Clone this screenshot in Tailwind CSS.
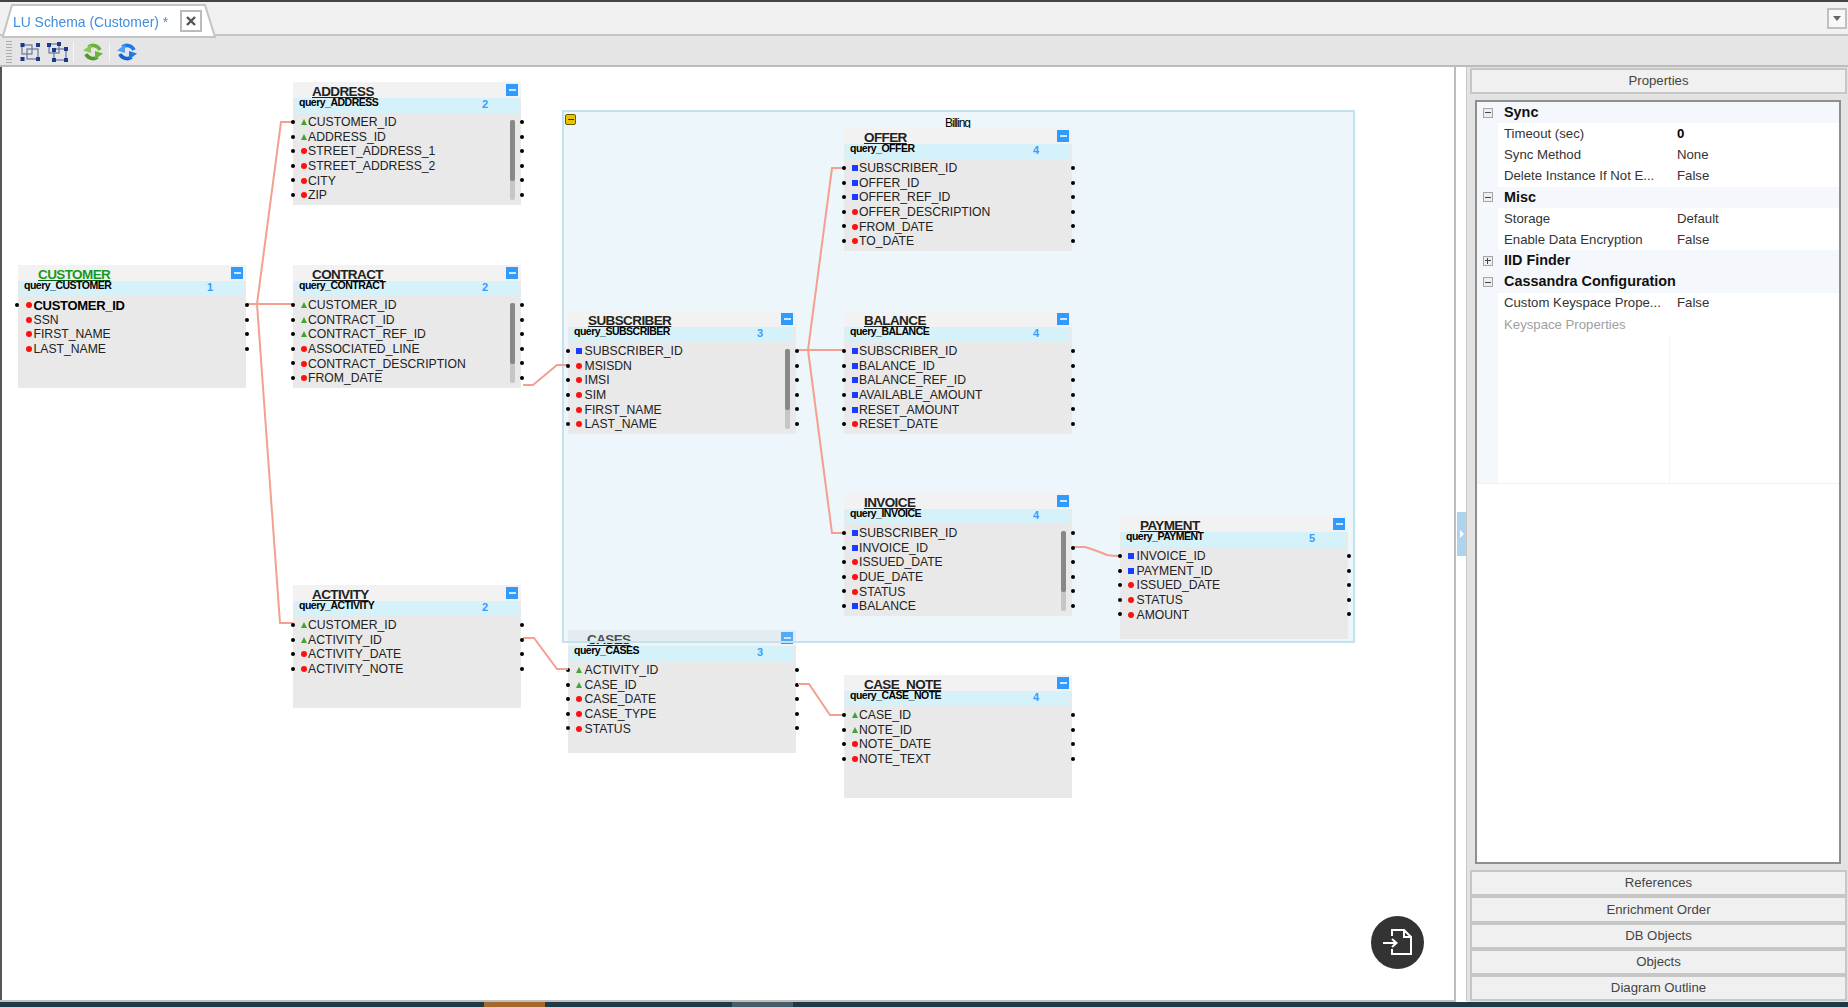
<!doctype html>
<html><head><meta charset="utf-8"><script src="https://cdn.jsdelivr.net/npm/@tailwindcss/browser@4"></script><title>LU Schema</title></head>
<body class="overflow-hidden bg-white">
<div class="relative flex flex-col w-[1848px] h-[1007px] overflow-hidden font-['Liberation_Sans',Arial,sans-serif] text-[#222] blur-[0.5px]">

<!-- tab strip -->
<div class="relative h-[36px] shrink-0 bg-[#f1f1f1] border-t-2 border-t-[#444] border-b-2 border-b-[#c4c4c4]">
  <svg class="absolute left-0 top-[-2px]" width="230" height="38"><polygon points="3,36 12,5 205,5 215,37 3,37" fill="#fff" stroke="#c4c4c4" stroke-width="2"/></svg>
  <span class="absolute left-[13px] top-[11px] text-[13.9px] leading-[18px] text-[#3f8fdd]">LU Schema (Customer) *</span>
  <div class="absolute left-[180px] top-[8px] size-[22px] bg-white border-2 border-[#bbb] flex items-center justify-center">
    <svg width="12" height="12"><path d="M2 2L10 10M10 2L2 10" stroke="#555" stroke-width="2.4"/></svg>
  </div>
  <div class="absolute left-[1827px] top-[6px] w-[20px] h-[21px] bg-[#f8f8f8] border-2 border-[#c0c0c0] flex items-center justify-center">
    <svg width="10" height="7"><polygon points="1,1 9,1 5,6" fill="#666"/></svg>
  </div>
</div>

<!-- toolbar -->
<div class="h-[31px] shrink-0 bg-[#e5e5e5] border-b-2 border-b-[#bcbcbc] flex items-center pl-[6px] pt-[2px]">
  <div class="w-[6px] h-[24px] bg-[radial-gradient(#a8a8a8_35%,transparent_40%)] bg-[length:2px_3px] mr-[8px]"></div>
  <svg width="22" height="22" class="mr-[4px]"><rect x="2" y="4" width="10" height="9" fill="none" stroke="#66789c" stroke-width="1.2"/><rect x="7" y="8" width="11" height="10" fill="none" stroke="#66789c" stroke-width="1.2"/><g fill="#1c3a8c"><rect x="0.5" y="2" width="4" height="4"/><rect x="16" y="2" width="4" height="4"/><rect x="0.5" y="16" width="4" height="4"/><rect x="16" y="16" width="4" height="4"/></g></svg>
  <svg width="22" height="22" class="mr-[5px]"><rect x="3" y="3" width="10" height="9" fill="none" stroke="#66789c" stroke-width="1.2"/><rect x="8" y="8" width="12" height="11" fill="none" stroke="#66789c" stroke-width="1.2"/><g fill="#1c3a8c"><rect x="1" y="2" width="4" height="4"/><rect x="11" y="1" width="4" height="4"/><rect x="6" y="7" width="4" height="4"/><rect x="18" y="6" width="4" height="4"/><rect x="6" y="17" width="4" height="4"/><rect x="18" y="17" width="4" height="4"/></g></svg>
  <div class="w-[1px] h-[20px] bg-[#f6f6f6] mr-[8px]"></div>
  <svg width="22" height="22" viewBox="0 0 22 22" class="mr-[5px]"><g><path d="M18 9A7.5 7.5 0 0 0 6.5 6" fill="none" stroke="#6cb33a" stroke-width="3.6"/><polygon points="1,9.5 9,3.5 9,12" fill="#8ac85a"/></g><g transform="rotate(180 11 11)"><path d="M18 9A7.5 7.5 0 0 0 6.5 6" fill="none" stroke="#4c9a2a" stroke-width="3.6"/><polygon points="1,9.5 9,3.5 9,12" fill="#6cb33a"/></g></svg>
  <div class="w-[1px] h-[20px] bg-[#f6f6f6] mr-[6px]"></div>
  <svg width="22" height="22" viewBox="0 0 22 22"><g><path d="M18 9A7.5 7.5 0 0 0 6.5 6" fill="none" stroke="#1e7be6" stroke-width="3.6"/><polygon points="1,9.5 9,3.5 9,12" fill="#4fa0f0"/></g><g transform="rotate(180 11 11)"><path d="M18 9A7.5 7.5 0 0 0 6.5 6" fill="none" stroke="#0f62d8" stroke-width="3.6"/><polygon points="1,9.5 9,3.5 9,12" fill="#1e7be6"/></g></svg>
</div>

<!-- main -->
<div class="flex-1 flex min-h-0">
  <!-- canvas -->
  <div class="relative w-[1456px] bg-white border-r-2 border-r-[#bdbdbd] border-b-2 border-b-[#c0c0c0] text-[12.2px]">
    <div class="absolute left-0 top-0 bottom-0 w-[2px] bg-[#555]"></div>

    <!-- CASES sits under the group -->
    <div class="absolute left-[568px] top-[563px] w-[228px] h-[123px] bg-[#e9e9e9]">
      <div class="relative h-[16px] bg-[#f2f2f2]"><span class="absolute left-[19px] top-[1px] text-[13.5px] leading-[18px] font-bold tracking-[-0.6px] underline underline-offset-[1px]">CASES</span><div class="absolute left-[213px] top-[2px] size-[12px] bg-[#2f9bff] flex items-center justify-center"><div class="w-[7px] h-[2px] bg-[#cfe8ff]"></div></div></div>
      <div class="relative h-[15px] mx-[2px] bg-[#d5f1f9]"><span class="absolute left-[4px] top-[-2px] text-[10.5px] leading-[12px] font-bold tracking-[-0.5px] text-black">query_CASES</span><span class="absolute left-[187px] top-[0px] text-[11px] leading-[13px] font-bold text-[#3a9bff]">3</span></div>
      <div class="pt-[2px]">
        <div class="relative flex items-center gap-[2.5px] h-[14.6px] pl-[8px]"><i class="absolute left-[-2px] top-[5px] size-[4px] rounded-full bg-black"></i><i class="w-0 h-0 border-x-[3px] border-x-transparent border-b-[6px] border-b-[#3fa535]"></i>ACTIVITY_ID<i class="absolute right-[-3px] top-[5px] size-[4px] rounded-full bg-black"></i></div>
        <div class="relative flex items-center gap-[2.5px] h-[14.6px] pl-[8px]"><i class="absolute left-[-2px] top-[5px] size-[4px] rounded-full bg-black"></i><i class="w-0 h-0 border-x-[3px] border-x-transparent border-b-[6px] border-b-[#3fa535]"></i>CASE_ID<i class="absolute right-[-3px] top-[5px] size-[4px] rounded-full bg-black"></i></div>
        <div class="relative flex items-center gap-[2.5px] h-[14.6px] pl-[8px]"><i class="absolute left-[-2px] top-[5px] size-[4px] rounded-full bg-black"></i><i class="size-[6px] rounded-full bg-[#ff1010]"></i>CASE_DATE<i class="absolute right-[-3px] top-[5px] size-[4px] rounded-full bg-black"></i></div>
        <div class="relative flex items-center gap-[2.5px] h-[14.6px] pl-[8px]"><i class="absolute left-[-2px] top-[5px] size-[4px] rounded-full bg-black"></i><i class="size-[6px] rounded-full bg-[#ff1010]"></i>CASE_TYPE<i class="absolute right-[-3px] top-[5px] size-[4px] rounded-full bg-black"></i></div>
        <div class="relative flex items-center gap-[2.5px] h-[14.6px] pl-[8px]"><i class="absolute left-[-2px] top-[5px] size-[4px] rounded-full bg-black"></i><i class="size-[6px] rounded-full bg-[#ff1010]"></i>STATUS<i class="absolute right-[-3px] top-[5px] size-[4px] rounded-full bg-black"></i></div>
      </div>
    </div>

    <!-- Billing group -->
    <div class="absolute left-[562px] top-[43px] w-[793px] h-[533px] bg-[#b8dcec]/25 border-2 border-[#c4e2ee]">
      <div class="absolute left-[1px] top-[2px] size-[11px] rounded-[2px] bg-[#e8c400] border border-[#6b5a00] flex items-center justify-center"><div class="w-[6px] h-[1.5px] bg-[#333]"></div></div>
      <span class="absolute left-[381px] top-[4px] text-[12px] leading-[14px] text-black tracking-[-1px]">Billing</span>
    </div>

    <!-- links -->
    <svg class="absolute left-0 top-0" width="1456" height="934" viewBox="0 67 1456 934" fill="none" stroke="#f4a090" stroke-width="2">
      <path d="M247 304H257L281 122H293M257 304H293M257 304L280 623H293"/>
      <path d="M523 385H533L557 365H568"/>
      <path d="M798 350H808L832 168H844M798 350H844M808 350L832 533H844"/>
      <path d="M523 638H534L557 669H568"/>
      <path d="M798 684H809L830 715H844"/>
      <path d="M1074 547H1085Q1098 551 1107 555Q1112 556 1120 556"/>
    </svg>

    <!-- CUSTOMER -->
    <div class="absolute left-[18px] top-[198px] w-[228px] h-[123px] bg-[#e9e9e9]">
      <div class="relative h-[16px] bg-[#f2f2f2]"><span class="absolute left-[20px] top-[1px] text-[13.5px] leading-[18px] font-bold tracking-[-0.6px] text-[#17991f] underline decoration-[#0b5a10] underline-offset-[1px]">CUSTOMER</span><div class="absolute left-[213px] top-[2px] size-[12px] bg-[#2f9bff] flex items-center justify-center"><div class="w-[7px] h-[2px] bg-[#cfe8ff]"></div></div></div>
      <div class="relative h-[15px] mx-[2px] bg-[#d5f1f9]"><span class="absolute left-[4px] top-[-2px] text-[10.5px] leading-[12px] font-bold tracking-[-0.5px] text-black">query_CUSTOMER</span><span class="absolute left-[187px] top-[0px] text-[11px] leading-[13px] font-bold text-[#3a9bff]">1</span></div>
      <div class="pt-[2px]">
        <div class="relative flex items-center gap-[1.5px] h-[14.6px] pl-[8px] font-bold text-[13px] tracking-[-0.3px] text-black"><i class="absolute left-[-3px] top-[5px] size-[4px] rounded-full bg-black"></i><i class="size-[6px] rounded-full bg-[#ff1010]"></i>CUSTOMER_ID<i class="absolute right-[-3px] top-[5px] size-[4px] rounded-full bg-black"></i></div>
        <div class="relative flex items-center gap-[1.5px] h-[14.6px] pl-[8px]"><i class="size-[6px] rounded-full bg-[#ff1010]"></i>SSN<i class="absolute right-[-3px] top-[5px] size-[4px] rounded-full bg-black"></i></div>
        <div class="relative flex items-center gap-[1.5px] h-[14.6px] pl-[8px]"><i class="size-[6px] rounded-full bg-[#ff1010]"></i>FIRST_NAME<i class="absolute right-[-3px] top-[5px] size-[4px] rounded-full bg-black"></i></div>
        <div class="relative flex items-center gap-[1.5px] h-[14.6px] pl-[8px]"><i class="size-[6px] rounded-full bg-[#ff1010]"></i>LAST_NAME<i class="absolute right-[-3px] top-[5px] size-[4px] rounded-full bg-black"></i></div>
      </div>
    </div>

    <!-- ADDRESS -->
    <div class="absolute left-[293px] top-[15px] w-[228px] h-[123px] bg-[#e9e9e9]">
      <div class="relative h-[16px] bg-[#f2f2f2]"><span class="absolute left-[19px] top-[1px] text-[13.5px] leading-[18px] font-bold tracking-[-0.6px] underline underline-offset-[1px]">ADDRESS</span><div class="absolute left-[213px] top-[2px] size-[12px] bg-[#2f9bff] flex items-center justify-center"><div class="w-[7px] h-[2px] bg-[#cfe8ff]"></div></div></div>
      <div class="relative h-[15px] mx-[2px] bg-[#d5f1f9]"><span class="absolute left-[4px] top-[-2px] text-[10.5px] leading-[12px] font-bold tracking-[-0.5px] text-black">query_ADDRESS</span><span class="absolute left-[187px] top-[0px] text-[11px] leading-[13px] font-bold text-[#3a9bff]">2</span></div>
      <div class="absolute left-[217px] top-[38px] w-[5px] h-[80px] rounded-[2px] bg-[#c6c6c6]"><div class="h-[61px] rounded-[2px] bg-[#888]"></div></div>
      <div class="pt-[2px]">
        <div class="relative flex items-center gap-[1px] h-[14.6px] pl-[8px]"><i class="absolute left-[-2px] top-[5px] size-[4px] rounded-full bg-black"></i><i class="w-0 h-0 border-x-[3px] border-x-transparent border-b-[6px] border-b-[#3fa535]"></i>CUSTOMER_ID<i class="absolute right-[-3px] top-[5px] size-[4px] rounded-full bg-black"></i></div>
        <div class="relative flex items-center gap-[1px] h-[14.6px] pl-[8px]"><i class="absolute left-[-2px] top-[5px] size-[4px] rounded-full bg-black"></i><i class="w-0 h-0 border-x-[3px] border-x-transparent border-b-[6px] border-b-[#3fa535]"></i>ADDRESS_ID<i class="absolute right-[-3px] top-[5px] size-[4px] rounded-full bg-black"></i></div>
        <div class="relative flex items-center gap-[1px] h-[14.6px] pl-[8px]"><i class="absolute left-[-2px] top-[5px] size-[4px] rounded-full bg-black"></i><i class="size-[6px] rounded-full bg-[#ff1010]"></i>STREET_ADDRESS_1<i class="absolute right-[-3px] top-[5px] size-[4px] rounded-full bg-black"></i></div>
        <div class="relative flex items-center gap-[1px] h-[14.6px] pl-[8px]"><i class="absolute left-[-2px] top-[5px] size-[4px] rounded-full bg-black"></i><i class="size-[6px] rounded-full bg-[#ff1010]"></i>STREET_ADDRESS_2<i class="absolute right-[-3px] top-[5px] size-[4px] rounded-full bg-black"></i></div>
        <div class="relative flex items-center gap-[1px] h-[14.6px] pl-[8px]"><i class="absolute left-[-2px] top-[5px] size-[4px] rounded-full bg-black"></i><i class="size-[6px] rounded-full bg-[#ff1010]"></i>CITY<i class="absolute right-[-3px] top-[5px] size-[4px] rounded-full bg-black"></i></div>
        <div class="relative flex items-center gap-[1px] h-[14.6px] pl-[8px]"><i class="absolute left-[-2px] top-[5px] size-[4px] rounded-full bg-black"></i><i class="size-[6px] rounded-full bg-[#ff1010]"></i>ZIP<i class="absolute right-[-3px] top-[5px] size-[4px] rounded-full bg-black"></i></div>
      </div>
    </div>

    <!-- CONTRACT -->
    <div class="absolute left-[293px] top-[198px] w-[228px] h-[123px] bg-[#e9e9e9]">
      <div class="relative h-[16px] bg-[#f2f2f2]"><span class="absolute left-[19px] top-[1px] text-[13.5px] leading-[18px] font-bold tracking-[-0.6px] underline underline-offset-[1px]">CONTRACT</span><div class="absolute left-[213px] top-[2px] size-[12px] bg-[#2f9bff] flex items-center justify-center"><div class="w-[7px] h-[2px] bg-[#cfe8ff]"></div></div></div>
      <div class="relative h-[15px] mx-[2px] bg-[#d5f1f9]"><span class="absolute left-[4px] top-[-2px] text-[10.5px] leading-[12px] font-bold tracking-[-0.5px] text-black">query_CONTRACT</span><span class="absolute left-[187px] top-[0px] text-[11px] leading-[13px] font-bold text-[#3a9bff]">2</span></div>
      <div class="absolute left-[217px] top-[38px] w-[5px] h-[80px] rounded-[2px] bg-[#c6c6c6]"><div class="h-[61px] rounded-[2px] bg-[#888]"></div></div>
      <div class="pt-[2px]">
        <div class="relative flex items-center gap-[1px] h-[14.6px] pl-[8px]"><i class="absolute left-[-2px] top-[5px] size-[4px] rounded-full bg-black"></i><i class="w-0 h-0 border-x-[3px] border-x-transparent border-b-[6px] border-b-[#3fa535]"></i>CUSTOMER_ID<i class="absolute right-[-3px] top-[5px] size-[4px] rounded-full bg-black"></i></div>
        <div class="relative flex items-center gap-[1px] h-[14.6px] pl-[8px]"><i class="absolute left-[-2px] top-[5px] size-[4px] rounded-full bg-black"></i><i class="w-0 h-0 border-x-[3px] border-x-transparent border-b-[6px] border-b-[#3fa535]"></i>CONTRACT_ID<i class="absolute right-[-3px] top-[5px] size-[4px] rounded-full bg-black"></i></div>
        <div class="relative flex items-center gap-[1px] h-[14.6px] pl-[8px]"><i class="absolute left-[-2px] top-[5px] size-[4px] rounded-full bg-black"></i><i class="w-0 h-0 border-x-[3px] border-x-transparent border-b-[6px] border-b-[#3fa535]"></i>CONTRACT_REF_ID<i class="absolute right-[-3px] top-[5px] size-[4px] rounded-full bg-black"></i></div>
        <div class="relative flex items-center gap-[1px] h-[14.6px] pl-[8px]"><i class="absolute left-[-2px] top-[5px] size-[4px] rounded-full bg-black"></i><i class="size-[6px] rounded-full bg-[#ff1010]"></i>ASSOCIATED_LINE<i class="absolute right-[-3px] top-[5px] size-[4px] rounded-full bg-black"></i></div>
        <div class="relative flex items-center gap-[1px] h-[14.6px] pl-[8px]"><i class="absolute left-[-2px] top-[5px] size-[4px] rounded-full bg-black"></i><i class="size-[6px] rounded-full bg-[#ff1010]"></i>CONTRACT_DESCRIPTION<i class="absolute right-[-3px] top-[5px] size-[4px] rounded-full bg-black"></i></div>
        <div class="relative flex items-center gap-[1px] h-[14.6px] pl-[8px]"><i class="absolute left-[-2px] top-[5px] size-[4px] rounded-full bg-black"></i><i class="size-[6px] rounded-full bg-[#ff1010]"></i>FROM_DATE<i class="absolute right-[-3px] top-[5px] size-[4px] rounded-full bg-black"></i></div>
      </div>
    </div>

    <!-- ACTIVITY -->
    <div class="absolute left-[293px] top-[518px] w-[228px] h-[123px] bg-[#e9e9e9]">
      <div class="relative h-[16px] bg-[#f2f2f2]"><span class="absolute left-[19px] top-[1px] text-[13.5px] leading-[18px] font-bold tracking-[-0.6px] underline underline-offset-[1px]">ACTIVITY</span><div class="absolute left-[213px] top-[2px] size-[12px] bg-[#2f9bff] flex items-center justify-center"><div class="w-[7px] h-[2px] bg-[#cfe8ff]"></div></div></div>
      <div class="relative h-[15px] mx-[2px] bg-[#d5f1f9]"><span class="absolute left-[4px] top-[-2px] text-[10.5px] leading-[12px] font-bold tracking-[-0.5px] text-black">query_ACTIVITY</span><span class="absolute left-[187px] top-[0px] text-[11px] leading-[13px] font-bold text-[#3a9bff]">2</span></div>
      <div class="pt-[2px]">
        <div class="relative flex items-center gap-[1px] h-[14.6px] pl-[8px]"><i class="absolute left-[-2px] top-[5px] size-[4px] rounded-full bg-black"></i><i class="w-0 h-0 border-x-[3px] border-x-transparent border-b-[6px] border-b-[#3fa535]"></i>CUSTOMER_ID<i class="absolute right-[-3px] top-[5px] size-[4px] rounded-full bg-black"></i></div>
        <div class="relative flex items-center gap-[1px] h-[14.6px] pl-[8px]"><i class="absolute left-[-2px] top-[5px] size-[4px] rounded-full bg-black"></i><i class="w-0 h-0 border-x-[3px] border-x-transparent border-b-[6px] border-b-[#3fa535]"></i>ACTIVITY_ID<i class="absolute right-[-3px] top-[5px] size-[4px] rounded-full bg-black"></i></div>
        <div class="relative flex items-center gap-[1px] h-[14.6px] pl-[8px]"><i class="absolute left-[-2px] top-[5px] size-[4px] rounded-full bg-black"></i><i class="size-[6px] rounded-full bg-[#ff1010]"></i>ACTIVITY_DATE<i class="absolute right-[-3px] top-[5px] size-[4px] rounded-full bg-black"></i></div>
        <div class="relative flex items-center gap-[1px] h-[14.6px] pl-[8px]"><i class="absolute left-[-2px] top-[5px] size-[4px] rounded-full bg-black"></i><i class="size-[6px] rounded-full bg-[#ff1010]"></i>ACTIVITY_NOTE<i class="absolute right-[-3px] top-[5px] size-[4px] rounded-full bg-black"></i></div>
      </div>
    </div>

    <!-- SUBSCRIBER -->
    <div class="absolute left-[568px] top-[244px] w-[228px] h-[123px] bg-[#e9e9e9]">
      <div class="relative h-[16px] bg-[#f2f2f2]"><span class="absolute left-[20px] top-[1px] text-[13.5px] leading-[18px] font-bold tracking-[-0.6px] underline underline-offset-[1px]">SUBSCRIBER</span><div class="absolute left-[213px] top-[2px] size-[12px] bg-[#2f9bff] flex items-center justify-center"><div class="w-[7px] h-[2px] bg-[#cfe8ff]"></div></div></div>
      <div class="relative h-[15px] mx-[2px] bg-[#d5f1f9]"><span class="absolute left-[4px] top-[-2px] text-[10.5px] leading-[12px] font-bold tracking-[-0.5px] text-black">query_SUBSCRIBER</span><span class="absolute left-[187px] top-[0px] text-[11px] leading-[13px] font-bold text-[#3a9bff]">3</span></div>
      <div class="absolute left-[217px] top-[38px] w-[5px] h-[80px] rounded-[2px] bg-[#c6c6c6]"><div class="h-[61px] rounded-[2px] bg-[#888]"></div></div>
      <div class="pt-[2px]">
        <div class="relative flex items-center gap-[2.5px] h-[14.6px] pl-[8px]"><i class="absolute left-[-2px] top-[5px] size-[4px] rounded-full bg-black"></i><i class="size-[6px] bg-[#1a3cff]"></i>SUBSCRIBER_ID<i class="absolute right-[-3px] top-[5px] size-[4px] rounded-full bg-black"></i></div>
        <div class="relative flex items-center gap-[2.5px] h-[14.6px] pl-[8px]"><i class="absolute left-[-2px] top-[5px] size-[4px] rounded-full bg-black"></i><i class="size-[6px] rounded-full bg-[#ff1010]"></i>MSISDN<i class="absolute right-[-3px] top-[5px] size-[4px] rounded-full bg-black"></i></div>
        <div class="relative flex items-center gap-[2.5px] h-[14.6px] pl-[8px]"><i class="absolute left-[-2px] top-[5px] size-[4px] rounded-full bg-black"></i><i class="size-[6px] rounded-full bg-[#ff1010]"></i>IMSI<i class="absolute right-[-3px] top-[5px] size-[4px] rounded-full bg-black"></i></div>
        <div class="relative flex items-center gap-[2.5px] h-[14.6px] pl-[8px]"><i class="absolute left-[-2px] top-[5px] size-[4px] rounded-full bg-black"></i><i class="size-[6px] rounded-full bg-[#ff1010]"></i>SIM<i class="absolute right-[-3px] top-[5px] size-[4px] rounded-full bg-black"></i></div>
        <div class="relative flex items-center gap-[2.5px] h-[14.6px] pl-[8px]"><i class="absolute left-[-2px] top-[5px] size-[4px] rounded-full bg-black"></i><i class="size-[6px] rounded-full bg-[#ff1010]"></i>FIRST_NAME<i class="absolute right-[-3px] top-[5px] size-[4px] rounded-full bg-black"></i></div>
        <div class="relative flex items-center gap-[2.5px] h-[14.6px] pl-[8px]"><i class="absolute left-[-2px] top-[5px] size-[4px] rounded-full bg-black"></i><i class="size-[6px] rounded-full bg-[#ff1010]"></i>LAST_NAME<i class="absolute right-[-3px] top-[5px] size-[4px] rounded-full bg-black"></i></div>
      </div>
    </div>

    <!-- OFFER -->
    <div class="absolute left-[844px] top-[61px] w-[228px] h-[123px] bg-[#e9e9e9]">
      <div class="relative h-[16px] bg-[#f2f2f2]"><span class="absolute left-[20px] top-[1px] text-[13.5px] leading-[18px] font-bold tracking-[-0.6px] underline underline-offset-[1px]">OFFER</span><div class="absolute left-[213px] top-[2px] size-[12px] bg-[#2f9bff] flex items-center justify-center"><div class="w-[7px] h-[2px] bg-[#cfe8ff]"></div></div></div>
      <div class="relative h-[15px] mx-[2px] bg-[#d5f1f9]"><span class="absolute left-[4px] top-[-2px] text-[10.5px] leading-[12px] font-bold tracking-[-0.5px] text-black">query_OFFER</span><span class="absolute left-[187px] top-[0px] text-[11px] leading-[13px] font-bold text-[#3a9bff]">4</span></div>
      <div class="pt-[2px]">
        <div class="relative flex items-center gap-[1px] h-[14.6px] pl-[8px]"><i class="absolute left-[-2px] top-[5px] size-[4px] rounded-full bg-black"></i><i class="size-[6px] bg-[#1a3cff]"></i>SUBSCRIBER_ID<i class="absolute right-[-3px] top-[5px] size-[4px] rounded-full bg-black"></i></div>
        <div class="relative flex items-center gap-[1px] h-[14.6px] pl-[8px]"><i class="absolute left-[-2px] top-[5px] size-[4px] rounded-full bg-black"></i><i class="size-[6px] bg-[#1a3cff]"></i>OFFER_ID<i class="absolute right-[-3px] top-[5px] size-[4px] rounded-full bg-black"></i></div>
        <div class="relative flex items-center gap-[1px] h-[14.6px] pl-[8px]"><i class="absolute left-[-2px] top-[5px] size-[4px] rounded-full bg-black"></i><i class="size-[6px] bg-[#1a3cff]"></i>OFFER_REF_ID<i class="absolute right-[-3px] top-[5px] size-[4px] rounded-full bg-black"></i></div>
        <div class="relative flex items-center gap-[1px] h-[14.6px] pl-[8px]"><i class="absolute left-[-2px] top-[5px] size-[4px] rounded-full bg-black"></i><i class="size-[6px] rounded-full bg-[#ff1010]"></i>OFFER_DESCRIPTION<i class="absolute right-[-3px] top-[5px] size-[4px] rounded-full bg-black"></i></div>
        <div class="relative flex items-center gap-[1px] h-[14.6px] pl-[8px]"><i class="absolute left-[-2px] top-[5px] size-[4px] rounded-full bg-black"></i><i class="size-[6px] rounded-full bg-[#ff1010]"></i>FROM_DATE<i class="absolute right-[-3px] top-[5px] size-[4px] rounded-full bg-black"></i></div>
        <div class="relative flex items-center gap-[1px] h-[14.6px] pl-[8px]"><i class="absolute left-[-2px] top-[5px] size-[4px] rounded-full bg-black"></i><i class="size-[6px] rounded-full bg-[#ff1010]"></i>TO_DATE<i class="absolute right-[-3px] top-[5px] size-[4px] rounded-full bg-black"></i></div>
      </div>
    </div>

    <!-- BALANCE -->
    <div class="absolute left-[844px] top-[244px] w-[228px] h-[123px] bg-[#e9e9e9]">
      <div class="relative h-[16px] bg-[#f2f2f2]"><span class="absolute left-[20px] top-[1px] text-[13.5px] leading-[18px] font-bold tracking-[-0.6px] underline underline-offset-[1px]">BALANCE</span><div class="absolute left-[213px] top-[2px] size-[12px] bg-[#2f9bff] flex items-center justify-center"><div class="w-[7px] h-[2px] bg-[#cfe8ff]"></div></div></div>
      <div class="relative h-[15px] mx-[2px] bg-[#d5f1f9]"><span class="absolute left-[4px] top-[-2px] text-[10.5px] leading-[12px] font-bold tracking-[-0.5px] text-black">query_BALANCE</span><span class="absolute left-[187px] top-[0px] text-[11px] leading-[13px] font-bold text-[#3a9bff]">4</span></div>
      <div class="pt-[2px]">
        <div class="relative flex items-center gap-[1px] h-[14.6px] pl-[8px]"><i class="absolute left-[-2px] top-[5px] size-[4px] rounded-full bg-black"></i><i class="size-[6px] bg-[#1a3cff]"></i>SUBSCRIBER_ID<i class="absolute right-[-3px] top-[5px] size-[4px] rounded-full bg-black"></i></div>
        <div class="relative flex items-center gap-[1px] h-[14.6px] pl-[8px]"><i class="absolute left-[-2px] top-[5px] size-[4px] rounded-full bg-black"></i><i class="size-[6px] bg-[#1a3cff]"></i>BALANCE_ID<i class="absolute right-[-3px] top-[5px] size-[4px] rounded-full bg-black"></i></div>
        <div class="relative flex items-center gap-[1px] h-[14.6px] pl-[8px]"><i class="absolute left-[-2px] top-[5px] size-[4px] rounded-full bg-black"></i><i class="size-[6px] bg-[#1a3cff]"></i>BALANCE_REF_ID<i class="absolute right-[-3px] top-[5px] size-[4px] rounded-full bg-black"></i></div>
        <div class="relative flex items-center gap-[1px] h-[14.6px] pl-[8px]"><i class="absolute left-[-2px] top-[5px] size-[4px] rounded-full bg-black"></i><i class="size-[6px] bg-[#1a3cff]"></i>AVAILABLE_AMOUNT<i class="absolute right-[-3px] top-[5px] size-[4px] rounded-full bg-black"></i></div>
        <div class="relative flex items-center gap-[1px] h-[14.6px] pl-[8px]"><i class="absolute left-[-2px] top-[5px] size-[4px] rounded-full bg-black"></i><i class="size-[6px] bg-[#1a3cff]"></i>RESET_AMOUNT<i class="absolute right-[-3px] top-[5px] size-[4px] rounded-full bg-black"></i></div>
        <div class="relative flex items-center gap-[1px] h-[14.6px] pl-[8px]"><i class="absolute left-[-2px] top-[5px] size-[4px] rounded-full bg-black"></i><i class="size-[6px] rounded-full bg-[#ff1010]"></i>RESET_DATE<i class="absolute right-[-3px] top-[5px] size-[4px] rounded-full bg-black"></i></div>
      </div>
    </div>

    <!-- INVOICE -->
    <div class="absolute left-[844px] top-[426px] w-[228px] h-[123px] bg-[#e9e9e9]">
      <div class="relative h-[16px] bg-[#f2f2f2]"><span class="absolute left-[20px] top-[1px] text-[13.5px] leading-[18px] font-bold tracking-[-0.6px] underline underline-offset-[1px]">INVOICE</span><div class="absolute left-[213px] top-[2px] size-[12px] bg-[#2f9bff] flex items-center justify-center"><div class="w-[7px] h-[2px] bg-[#cfe8ff]"></div></div></div>
      <div class="relative h-[15px] mx-[2px] bg-[#d5f1f9]"><span class="absolute left-[4px] top-[-2px] text-[10.5px] leading-[12px] font-bold tracking-[-0.5px] text-black">query_INVOICE</span><span class="absolute left-[187px] top-[0px] text-[11px] leading-[13px] font-bold text-[#3a9bff]">4</span></div>
      <div class="absolute left-[217px] top-[38px] w-[5px] h-[80px] rounded-[2px] bg-[#c6c6c6]"><div class="h-[61px] rounded-[2px] bg-[#888]"></div></div>
      <div class="pt-[2px]">
        <div class="relative flex items-center gap-[1px] h-[14.6px] pl-[8px]"><i class="absolute left-[-2px] top-[5px] size-[4px] rounded-full bg-black"></i><i class="size-[6px] bg-[#1a3cff]"></i>SUBSCRIBER_ID<i class="absolute right-[-3px] top-[5px] size-[4px] rounded-full bg-black"></i></div>
        <div class="relative flex items-center gap-[1px] h-[14.6px] pl-[8px]"><i class="absolute left-[-2px] top-[5px] size-[4px] rounded-full bg-black"></i><i class="size-[6px] bg-[#1a3cff]"></i>INVOICE_ID<i class="absolute right-[-3px] top-[5px] size-[4px] rounded-full bg-black"></i></div>
        <div class="relative flex items-center gap-[1px] h-[14.6px] pl-[8px]"><i class="absolute left-[-2px] top-[5px] size-[4px] rounded-full bg-black"></i><i class="size-[6px] rounded-full bg-[#ff1010]"></i>ISSUED_DATE<i class="absolute right-[-3px] top-[5px] size-[4px] rounded-full bg-black"></i></div>
        <div class="relative flex items-center gap-[1px] h-[14.6px] pl-[8px]"><i class="absolute left-[-2px] top-[5px] size-[4px] rounded-full bg-black"></i><i class="size-[6px] rounded-full bg-[#ff1010]"></i>DUE_DATE<i class="absolute right-[-3px] top-[5px] size-[4px] rounded-full bg-black"></i></div>
        <div class="relative flex items-center gap-[1px] h-[14.6px] pl-[8px]"><i class="absolute left-[-2px] top-[5px] size-[4px] rounded-full bg-black"></i><i class="size-[6px] rounded-full bg-[#ff1010]"></i>STATUS<i class="absolute right-[-3px] top-[5px] size-[4px] rounded-full bg-black"></i></div>
        <div class="relative flex items-center gap-[1px] h-[14.6px] pl-[8px]"><i class="absolute left-[-2px] top-[5px] size-[4px] rounded-full bg-black"></i><i class="size-[6px] bg-[#1a3cff]"></i>BALANCE<i class="absolute right-[-3px] top-[5px] size-[4px] rounded-full bg-black"></i></div>
      </div>
    </div>

    <!-- CASE_NOTE -->
    <div class="absolute left-[844px] top-[608px] w-[228px] h-[123px] bg-[#e9e9e9]">
      <div class="relative h-[16px] bg-[#f2f2f2]"><span class="absolute left-[20px] top-[1px] text-[13.5px] leading-[18px] font-bold tracking-[-0.6px] underline underline-offset-[1px]">CASE_NOTE</span><div class="absolute left-[213px] top-[2px] size-[12px] bg-[#2f9bff] flex items-center justify-center"><div class="w-[7px] h-[2px] bg-[#cfe8ff]"></div></div></div>
      <div class="relative h-[15px] mx-[2px] bg-[#d5f1f9]"><span class="absolute left-[4px] top-[-2px] text-[10.5px] leading-[12px] font-bold tracking-[-0.5px] text-black">query_CASE_NOTE</span><span class="absolute left-[187px] top-[0px] text-[11px] leading-[13px] font-bold text-[#3a9bff]">4</span></div>
      <div class="pt-[2px]">
        <div class="relative flex items-center gap-[1px] h-[14.6px] pl-[8px]"><i class="absolute left-[-2px] top-[5px] size-[4px] rounded-full bg-black"></i><i class="w-0 h-0 border-x-[3px] border-x-transparent border-b-[6px] border-b-[#3fa535]"></i>CASE_ID<i class="absolute right-[-3px] top-[5px] size-[4px] rounded-full bg-black"></i></div>
        <div class="relative flex items-center gap-[1px] h-[14.6px] pl-[8px]"><i class="absolute left-[-2px] top-[5px] size-[4px] rounded-full bg-black"></i><i class="w-0 h-0 border-x-[3px] border-x-transparent border-b-[6px] border-b-[#3fa535]"></i>NOTE_ID<i class="absolute right-[-3px] top-[5px] size-[4px] rounded-full bg-black"></i></div>
        <div class="relative flex items-center gap-[1px] h-[14.6px] pl-[8px]"><i class="absolute left-[-2px] top-[5px] size-[4px] rounded-full bg-black"></i><i class="size-[6px] rounded-full bg-[#ff1010]"></i>NOTE_DATE<i class="absolute right-[-3px] top-[5px] size-[4px] rounded-full bg-black"></i></div>
        <div class="relative flex items-center gap-[1px] h-[14.6px] pl-[8px]"><i class="absolute left-[-2px] top-[5px] size-[4px] rounded-full bg-black"></i><i class="size-[6px] rounded-full bg-[#ff1010]"></i>NOTE_TEXT<i class="absolute right-[-3px] top-[5px] size-[4px] rounded-full bg-black"></i></div>
      </div>
    </div>

    <!-- PAYMENT -->
    <div class="absolute left-[1120px] top-[449px] w-[228px] h-[123px] bg-[#e9e9e9]">
      <div class="relative h-[16px] bg-[#f2f2f2]"><span class="absolute left-[20px] top-[1px] text-[13.5px] leading-[18px] font-bold tracking-[-0.6px] underline underline-offset-[1px]">PAYMENT</span><div class="absolute left-[213px] top-[2px] size-[12px] bg-[#2f9bff] flex items-center justify-center"><div class="w-[7px] h-[2px] bg-[#cfe8ff]"></div></div></div>
      <div class="relative h-[15px] mx-[2px] bg-[#d5f1f9]"><span class="absolute left-[4px] top-[-2px] text-[10.5px] leading-[12px] font-bold tracking-[-0.5px] text-black">query_PAYMENT</span><span class="absolute left-[187px] top-[0px] text-[11px] leading-[13px] font-bold text-[#3a9bff]">5</span></div>
      <div class="pt-[2px]">
        <div class="relative flex items-center gap-[2.5px] h-[14.6px] pl-[8px]"><i class="absolute left-[-2px] top-[5px] size-[4px] rounded-full bg-black"></i><i class="size-[6px] bg-[#1a3cff]"></i>INVOICE_ID<i class="absolute right-[-3px] top-[5px] size-[4px] rounded-full bg-black"></i></div>
        <div class="relative flex items-center gap-[2.5px] h-[14.6px] pl-[8px]"><i class="absolute left-[-2px] top-[5px] size-[4px] rounded-full bg-black"></i><i class="size-[6px] bg-[#1a3cff]"></i>PAYMENT_ID<i class="absolute right-[-3px] top-[5px] size-[4px] rounded-full bg-black"></i></div>
        <div class="relative flex items-center gap-[2.5px] h-[14.6px] pl-[8px]"><i class="absolute left-[-2px] top-[5px] size-[4px] rounded-full bg-black"></i><i class="size-[6px] rounded-full bg-[#ff1010]"></i>ISSUED_DATE<i class="absolute right-[-3px] top-[5px] size-[4px] rounded-full bg-black"></i></div>
        <div class="relative flex items-center gap-[2.5px] h-[14.6px] pl-[8px]"><i class="absolute left-[-2px] top-[5px] size-[4px] rounded-full bg-black"></i><i class="size-[6px] rounded-full bg-[#ff1010]"></i>STATUS<i class="absolute right-[-3px] top-[5px] size-[4px] rounded-full bg-black"></i></div>
        <div class="relative flex items-center gap-[2.5px] h-[14.6px] pl-[8px]"><i class="absolute left-[-2px] top-[5px] size-[4px] rounded-full bg-black"></i><i class="size-[6px] rounded-full bg-[#ff1010]"></i>AMOUNT<i class="absolute right-[-3px] top-[5px] size-[4px] rounded-full bg-black"></i></div>
      </div>
    </div>

    <!-- floating button -->
    <div class="absolute left-[1371px] top-[849px] size-[53px] rounded-full bg-[#333] flex items-center justify-center">
      <svg width="53" height="53" fill="none" stroke="#fff" stroke-width="2"><path d="M21 20V14H33L40 21V38H21V33"/><path d="M33 14V21H40"/><path d="M12 27H25M21 23L25.5 27L21 31"/></svg>
    </div>
  </div>

  <!-- splitter -->
  <div class="relative w-[11px] h-[934px] bg-white border-r border-r-[#c8c8c8]">
    <div class="absolute left-[1px] top-[445px] w-[9px] h-[44px] bg-[#aed3ee] flex items-center justify-center"><svg width="6" height="10"><polygon points="1,1 5,5 1,9" fill="#fff"/></svg></div>
  </div>

  <!-- right panel -->
  <div class="flex-1 bg-[#e3e3e3] flex flex-col pl-[3px] pr-[1px] pt-[1px] text-[13.2px] text-[#444]">
    <div class="h-[26px] shrink-0 bg-[#f0f0f0] border-2 border-[#c6c6c6] flex items-center justify-center">Properties</div>
    <div class="ml-[5px] mr-[6px] mt-[6px] h-[764px] shrink-0 bg-white border-2 border-[#8f8f8f] text-[#333]">
      <div class="border-b border-b-[#f0f0f6]">
        <div class="flex items-center h-[21.2px] bg-[#f4f7fb]"><span class="w-[21px] flex justify-center"><span class="size-[10px] border border-[#a5a5a5] bg-[#eee] flex items-center justify-center"><i class="w-[6px] h-[1px] bg-[#444]"></i></span></span><span class="pl-[6px] font-bold text-[14.4px] text-[#111]">Sync</span></div>
        <div class="flex h-[21.2px] items-center"><span class="w-[21px] self-stretch bg-[#f4f7fb]"></span><span class="w-[172px] pl-[6px] whitespace-nowrap">Timeout (sec)</span><span class="pl-[7px] font-bold text-black">0</span></div>
        <div class="flex h-[21.2px] items-center"><span class="w-[21px] self-stretch bg-[#f4f7fb]"></span><span class="w-[172px] pl-[6px] whitespace-nowrap">Sync Method</span><span class="pl-[7px]">None</span></div>
        <div class="flex h-[21.2px] items-center"><span class="w-[21px] self-stretch bg-[#f4f7fb]"></span><span class="w-[172px] pl-[6px] whitespace-nowrap">Delete Instance If Not E...</span><span class="pl-[7px]">False</span></div>
        <div class="flex items-center h-[21.2px] bg-[#f4f7fb]"><span class="w-[21px] flex justify-center"><span class="size-[10px] border border-[#a5a5a5] bg-[#eee] flex items-center justify-center"><i class="w-[6px] h-[1px] bg-[#444]"></i></span></span><span class="pl-[6px] font-bold text-[14.4px] text-[#111]">Misc</span></div>
        <div class="flex h-[21.2px] items-center"><span class="w-[21px] self-stretch bg-[#f4f7fb]"></span><span class="w-[172px] pl-[6px] whitespace-nowrap">Storage</span><span class="pl-[7px]">Default</span></div>
        <div class="flex h-[21.2px] items-center"><span class="w-[21px] self-stretch bg-[#f4f7fb]"></span><span class="w-[172px] pl-[6px] whitespace-nowrap">Enable Data Encryption</span><span class="pl-[7px]">False</span></div>
        <div class="flex items-center h-[21.2px] bg-[#f4f7fb]"><span class="w-[21px] flex justify-center"><span class="relative size-[10px] border border-[#a5a5a5] bg-[#eee] flex items-center justify-center"><i class="w-[6px] h-[1px] bg-[#444]"></i><i class="absolute left-[3.5px] top-[1px] w-[1px] h-[6px] bg-[#444]"></i></span></span><span class="pl-[6px] font-bold text-[14.4px] text-[#111]">IID Finder</span></div>
        <div class="flex items-center h-[21.2px] bg-[#f4f7fb]"><span class="w-[21px] flex justify-center"><span class="size-[10px] border border-[#a5a5a5] bg-[#eee] flex items-center justify-center"><i class="w-[6px] h-[1px] bg-[#444]"></i></span></span><span class="pl-[6px] font-bold text-[14.4px] text-[#111]">Cassandra Configuration</span></div>
        <div class="flex h-[21.2px] items-center"><span class="w-[21px] self-stretch bg-[#f4f7fb]"></span><span class="w-[172px] pl-[6px] whitespace-nowrap">Custom Keyspace Prope...</span><span class="pl-[7px]">False</span></div>
        <div class="flex h-[21.2px] items-center"><span class="w-[21px] self-stretch bg-[#f4f7fb]"></span><span class="w-[172px] pl-[6px] whitespace-nowrap text-[#a0a0a0]">Keyspace Properties</span></div>
        <div class="flex h-[148px]"><span class="w-[21px] bg-[#f4f7fb]"></span><span class="w-[172px] border-r border-r-[#f4f4f8]"></span></div>
      </div>
    </div>
    <div class="mt-[6px] flex flex-col">
      <div class="h-[26.3px] bg-[#f0f0f0] border-2 border-[#c6c6c6] flex items-center justify-center">References</div>
      <div class="h-[26.3px] bg-[#f0f0f0] border-2 border-[#c6c6c6] flex items-center justify-center">Enrichment Order</div>
      <div class="h-[26.3px] bg-[#f0f0f0] border-2 border-[#c6c6c6] flex items-center justify-center">DB Objects</div>
      <div class="h-[26.3px] bg-[#f0f0f0] border-2 border-[#c6c6c6] flex items-center justify-center">Objects</div>
      <div class="h-[26.3px] bg-[#f0f0f0] border-2 border-[#c6c6c6] flex items-center justify-center">Diagram Outline</div>
    </div>
  </div>
</div>

<!-- taskbar -->
<div class="relative h-[5px] shrink-0 bg-[#1f3a45]">
  <div class="absolute left-[484px] top-0 bottom-0 w-[61px] bg-[#a5682f]"></div>
  <div class="absolute left-[732px] top-0 bottom-0 w-[61px] bg-[#4a5c68]"></div>
</div>
</div>
</body></html>
